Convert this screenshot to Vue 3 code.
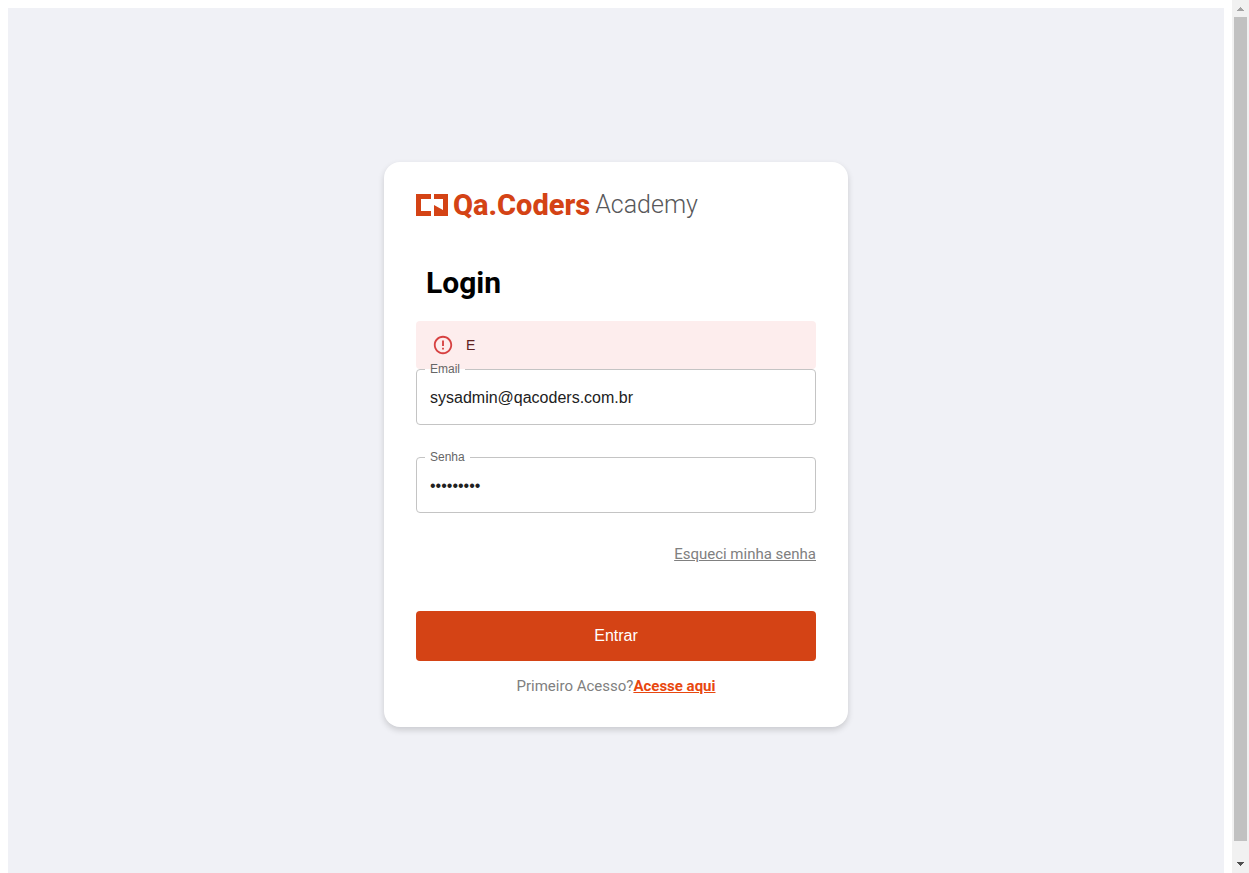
<script setup>
import { ref } from 'vue'

const email = ref('sysadmin@qacoders.com.br')
const password = ref('senha1234')
</script>

<template>
  <div class="shell">
    <div class="page">
      <main class="stage">
        <form class="card" @submit.prevent>
          <div class="logo">
            <svg class="mark" viewBox="0 0 33 22" aria-hidden="true">
              <path d="M0 0H15V5H5V17H15V22H0Z M18 0H32V22H18V11L27 16V5H18Z" fill="#d44315" />
            </svg>
            <span class="brand">Qa.Coders</span>
            <span class="academy">Academy</span>
          </div>
          <h1>Login</h1>
          <div class="alert" role="alert">
            <svg viewBox="0 0 24 24" aria-hidden="true">
              <path d="M11 15h2v2h-2zm0-8h2v6h-2zm.99-5C6.47 2 2 6.48 2 12s4.47 10 9.99 10C17.52 22 22 17.52 22 12S17.52 2 11.99 2zM12 20c-4.42 0-8-3.58-8-8s3.58-8 8-8 8 3.58 8 8-3.58 8-8 8z" fill="#d32f2f" />
            </svg>
            <span>E</span>
          </div>
          <fieldset class="field">
            <legend><label for="email">Email</label></legend>
            <input id="email" v-model="email" type="text" autocomplete="off" />
          </fieldset>
          <fieldset class="field second">
            <legend><label for="password">Senha</label></legend>
            <input id="password" v-model="password" type="password" autocomplete="off" />
          </fieldset>
          <a class="forgot" href="#">Esqueci minha senha</a>
          <button class="submit" type="submit">Entrar</button>
          <p class="first">Primeiro Acesso?<a href="#">Acesse aqui</a></p>
        </form>
      </main>
    </div>
    <div class="scrollbar" aria-hidden="true">
      <svg viewBox="0 0 17 17" shape-rendering="crispEdges"><path d="M8 7h1v1h1v1h1v1h1v1H5v-1h1V9h1V8h1z" fill="#a3a3a3" /></svg>
      <div class="thumb"></div>
      <svg viewBox="0 0 17 17" shape-rendering="crispEdges"><path d="M5 6h7v1h-1v1h-1v1H9v1H8V9H7V8H6V7H5z" fill="#505050" /></svg>
    </div>
  </div>
</template>

<style>
body {
  margin: 0;
}
</style>

<style scoped>
.shell {
  display: flex;
  height: 100vh;
  overflow: hidden;
  background: #fff;
  font-family: Roboto, "Liberation Sans", sans-serif;
}
.page {
  flex: 1;
  padding: 8px;
}
.stage {
  display: flex;
  align-items: center;
  justify-content: center;
  height: 100vh;
  background: #f0f1f6;
}
.card {
  box-sizing: border-box;
  display: flex;
  flex-direction: column;
  width: 464px;
  padding: 32px;
  border-radius: 16px;
  background: #fff;
  box-shadow: 0 3px 6px rgba(0, 0, 0, 0.16);
}
.logo {
  display: flex;
  align-items: center;
  height: 22px;
  white-space: nowrap;
}
.mark {
  width: 33px;
  height: 22px;
  margin-right: 4px;
}
.brand {
  margin-right: 5px;
  color: #d44315;
  font-size: 29px;
  font-weight: 800;
  line-height: 22px;
}
.academy {
  color: #58585a;
  font-size: 25px;
  font-weight: 300;
  line-height: 22px;
}
h1 {
  margin: 48px 0 20px 10px;
  font-size: 30px;
  font-weight: 700;
  line-height: 37px;
  color: #000;
}
.alert {
  box-sizing: border-box;
  display: flex;
  align-items: center;
  gap: 12px;
  height: 48px;
  padding: 0 16px;
  border-radius: 4px;
  background: #fdeded;
  color: #5f2120;
  font-family: "Liberation Sans", Arial, sans-serif;
  font-size: 14px;
}
.alert svg {
  width: 22px;
  height: 22px;
  opacity: 0.9;
}
.field {
  box-sizing: border-box;
  min-width: 0;
  height: 56px;
  margin: 0;
  padding: 0;
  border: 1px solid #c4c4c4;
  border-radius: 4px;
}
.second {
  margin-top: 32px;
}
legend {
  height: 1px;
  margin-left: 8px;
  padding: 0 5px;
  color: #666;
  font-family: "Liberation Sans", Arial, sans-serif;
  font-size: 12px;
  line-height: 1px;
}
.field input {
  box-sizing: border-box;
  display: block;
  width: 100%;
  height: 54px;
  padding: 1px 13px 0;
  border: 0;
  outline: 0;
  background: transparent;
  color: #212121;
  font-family: "Liberation Sans", Arial, sans-serif;
  font-size: 16px;
}
.forgot {
  align-self: flex-end;
  margin: 32px 0 48px;
  color: #808080;
  font-size: 15px;
  line-height: 18px;
}
.submit {
  height: 50px;
  border: 0;
  border-radius: 4px;
  background: #d44315;
  color: #fff;
  font-family: "Liberation Sans", Arial, sans-serif;
  font-size: 16px;
}
.first {
  margin: 16px 0 0;
  color: #808080;
  font-size: 15px;
  line-height: 18px;
  text-align: center;
}
.first a {
  color: #e8470f;
  font-weight: 700;
}
.scrollbar {
  display: flex;
  flex-direction: column;
  width: 17px;
  background: #f1f1f1;
}
.scrollbar svg {
  display: block;
  width: 17px;
  height: 17px;
}
.thumb {
  flex: 1;
  margin: 0 2px 15px;
  background: #c1c1c1;
}
</style>
